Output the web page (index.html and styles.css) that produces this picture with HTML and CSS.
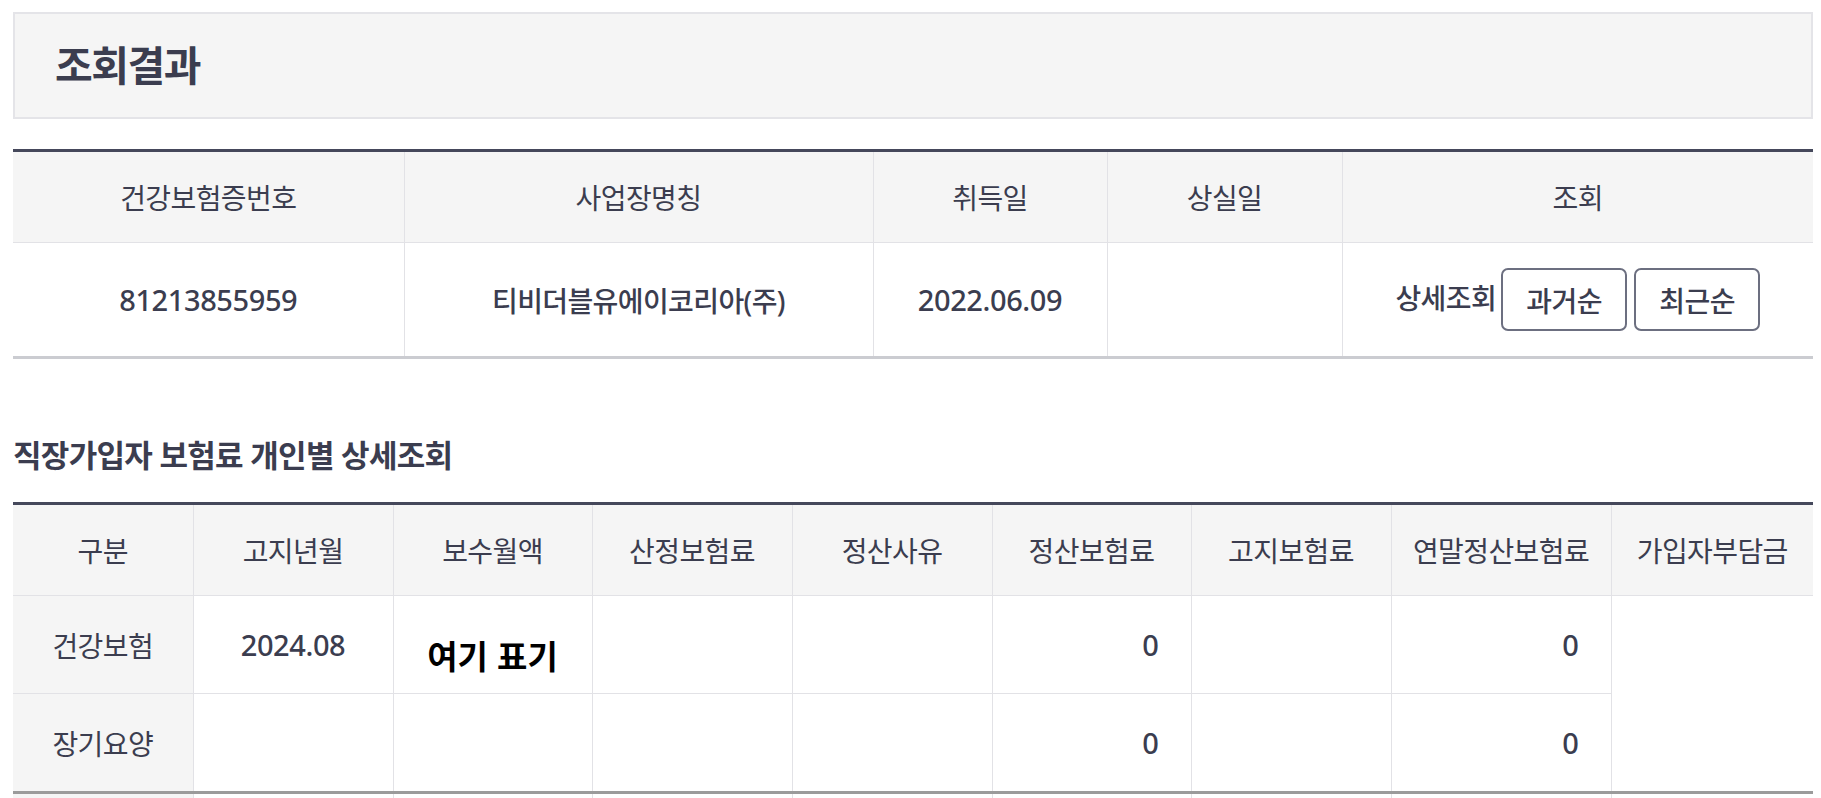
FILE: index.html
```html
<!DOCTYPE html>
<html lang="ko">
<head>
<meta charset="utf-8">
<title>조회결과</title>
<link rel="stylesheet" href="styles.css">
</head>
<body>
<div class="page">
  <div class="result-head">
    <h1 class="result-title">조회결과</h1>
  </div>

  <table class="grid grid-summary">
    <colgroup>
      <col class="s-c1"><col class="s-c2"><col class="s-c3"><col class="s-c4"><col class="s-c5">
    </colgroup>
    <thead>
      <tr class="head-row">
        <th>건강보험증번호</th>
        <th>사업장명칭</th>
        <th>취득일</th>
        <th>상실일</th>
        <th>조회</th>
      </tr>
    </thead>
    <tbody>
      <tr class="summary-row">
        <td class="num">81213855959</td>
        <td class="txt">티비더블유에이코리아(주)</td>
        <td class="num">2022.06.09</td>
        <td></td>
        <td>
          <div class="actions">
            <span class="actions-label">상세조회</span>
            <button type="button" class="btn">과거순</button>
            <button type="button" class="btn">최근순</button>
          </div>
        </td>
      </tr>
    </tbody>
  </table>

  <h2 class="section-title">직장가입자 보험료 개인별 상세조회</h2>

  <table class="grid grid-detail">
    <colgroup>
      <col class="d-c1"><col class="d-c2"><col class="d-c3"><col class="d-c4"><col class="d-c5">
      <col class="d-c6"><col class="d-c7"><col class="d-c8"><col class="d-c9">
    </colgroup>
    <thead>
      <tr class="head-row">
        <th>구분</th>
        <th>고지년월</th>
        <th>보수월액</th>
        <th>산정보험료</th>
        <th>정산사유</th>
        <th>정산보험료</th>
        <th>고지보험료</th>
        <th>연말정산보험료</th>
        <th>가입자부담금</th>
      </tr>
    </thead>
    <tbody>
      <tr class="detail-row">
        <th class="row-head">건강보험</th>
        <td class="num">2024.08</td>
        <td><span class="mark">여기 표기</span></td>
        <td></td>
        <td></td>
        <td class="num amount">0</td>
        <td></td>
        <td class="num amount">0</td>
        <td rowspan="2"></td>
      </tr>
      <tr class="detail-row">
        <th class="row-head">장기요양</th>
        <td></td>
        <td></td>
        <td></td>
        <td></td>
        <td class="num amount">0</td>
        <td></td>
        <td class="num amount">0</td>
      </tr>
    </tbody>
    <tfoot>
      <tr class="total-row">
        <th class="row-head"></th>
        <td></td><td></td><td></td><td></td><td></td><td></td><td></td><td></td>
      </tr>
    </tfoot>
  </table>
</div>
</body>
</html>
```

FILE: styles.css
```css
html {
  overflow: hidden;
}

body {
  margin: 0;
  background: #ffffff;
  color: #3b3d4f;
  font-family: "Noto Sans", "Noto Sans CJK KR", sans-serif;
}

.page {
  padding: 12px 8px 0 13px;
}

/* ---------- result header ---------- */
.result-head {
  box-sizing: border-box;
  height: 107px;
  display: flex;
  align-items: center;
  padding-left: 40px;
  background: #f5f5f5;
  border: 2px solid #e4e4e8;
}

.result-title {
  margin: 0;
  font-size: 41px;
  font-weight: 700;
  line-height: 1;
  letter-spacing: -1.5px;
  color: #3b3d4f;
}

/* ---------- tables ---------- */
.grid {
  width: 100%;
  table-layout: fixed;
  border-collapse: collapse;
  border-top: 3px solid #45485b;
}

.grid th,
.grid td {
  padding: 0;
  border: 1px solid #e2e2e6;
  text-align: center;
  vertical-align: middle;
  font-size: 28px;
  letter-spacing: -0.6px;
  color: #3b3d4f;
}

.grid tr > :first-child {
  border-left: 0;
}

.grid tr > :last-child {
  border-right: 0;
}

.grid thead th {
  background: #f5f5f5;
  font-weight: 400;
}

.head-row th {
  height: 90px;
}

.grid td {
  font-weight: 500;
}

.grid td.num {
  font-size: 29px;
  font-weight: 550;
  letter-spacing: -0.4px;
}

.grid td.amount {
  text-align: right;
  padding-right: 32px;
}

/* summary table */
.grid-summary {
  margin-top: 30px;
  border-bottom: 3px solid #cbccd1;
}

.s-c1 { width: 391px; }
.s-c2 { width: 469px; }
.s-c3 { width: 234px; }
.s-c4 { width: 235px; }
.s-c5 { width: 471px; }

.summary-row td {
  height: 113px;
}

.actions {
  display: flex;
  align-items: center;
  justify-content: center;
  gap: 7px;
}

.actions-label {
  margin-right: -2px;
  padding-bottom: 6px;
  font-weight: 500;
}

.btn {
  box-sizing: border-box;
  width: 126px;
  height: 63px;
  padding: 0;
  background: #ffffff;
  border: 2px solid #6c6f80;
  border-radius: 7px;
  font-family: "Noto Sans", "Noto Sans CJK KR", sans-serif;
  font-size: 28px;
  font-weight: 500;
  letter-spacing: -0.6px;
  color: #3b3d4f;
  cursor: pointer;
}

/* section title */
.section-title {
  margin: 76px 0 27px;
  font-size: 31px;
  font-weight: 700;
  line-height: 40px;
  letter-spacing: -0.7px;
  color: #3b3d4f;
}

/* detail table */
.d-c1 { width: 180px; }
.d-c2 { width: 200px; }
.d-c3 { width: 199px; }
.d-c4 { width: 200px; }
.d-c5 { width: 200px; }
.d-c6 { width: 199px; }
.d-c7 { width: 200px; }
.d-c8 { width: 220px; }
.d-c9 { width: 202px; }

.detail-row th,
.detail-row td {
  height: 97px;
}

.grid .row-head {
  background: #f5f5f5;
  font-weight: 400;
}

.mark {
  display: inline-block;
  padding-top: 20px;
  font-family: "Noto Sans CJK KR", sans-serif;
  font-size: 33px;
  font-weight: 700;
  letter-spacing: 0;
  color: #000000;
}

.total-row th,
.total-row td {
  height: 90px;
  border-top: 3px solid #9b9b9b;
}
```
